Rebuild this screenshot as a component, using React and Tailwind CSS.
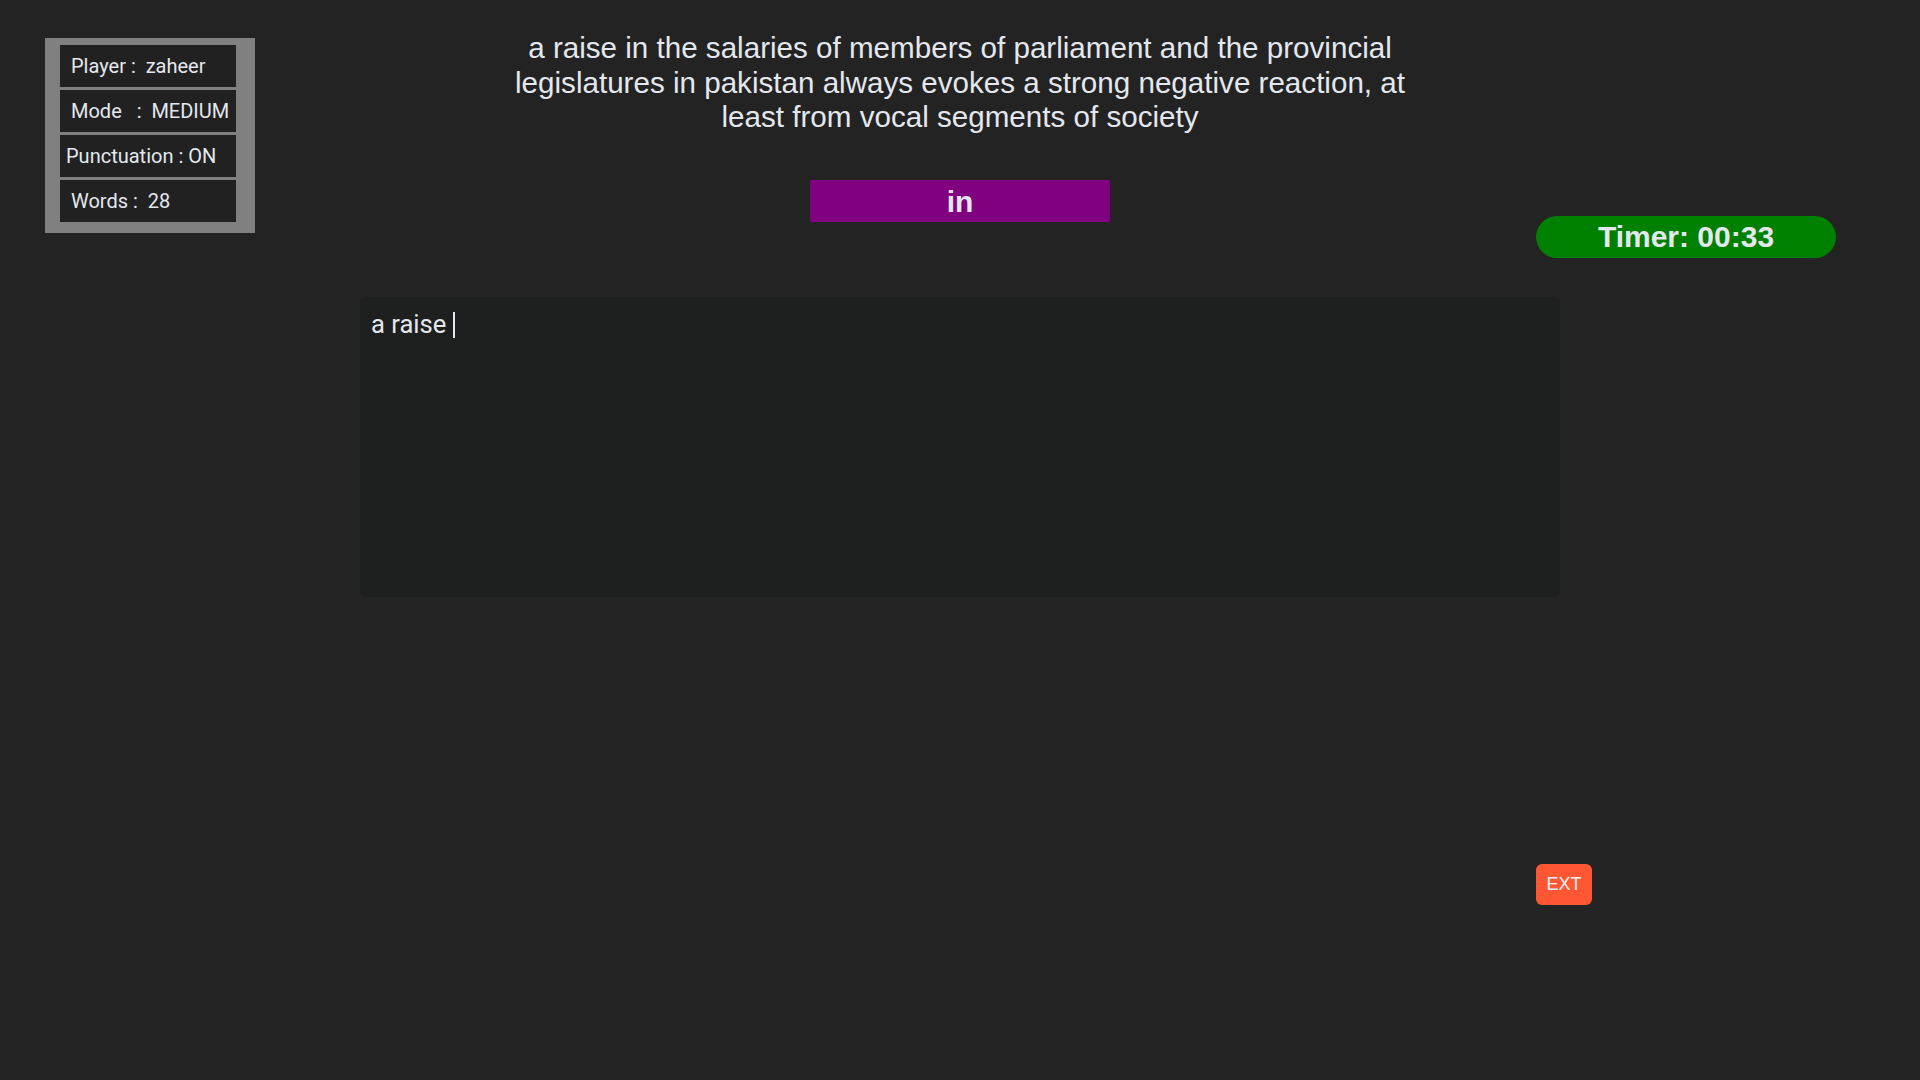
import { useState } from 'react';

const STATS = [
  { label: 'Player :  zaheer', pad: 'pl-[11px]' },
  { label: 'Mode   :  MEDIUM', pad: 'pl-[11px]' },
  { label: 'Punctuation : ON', pad: 'pl-[6px]' },
  { label: 'Words :  28', pad: 'pl-[11px]' },
];

const SENTENCE =
  'a raise in the salaries of members of parliament and the provincial legislatures in pakistan always evokes a strong negative reaction, at least from vocal segments of society';

export default function App() {
  const [typed] = useState('a raise ');

  return (
    <div className="min-h-screen w-full bg-[#232323] text-[#e4e8ee] font-['Liberation_Sans',Arial,sans-serif]">
      <div className="grid grid-cols-[1fr_920px_1fr] items-start">
        {/* stats panel */}
        <div className="ml-[45px] mt-[38px] w-[210px] bg-[#808080] pl-[15px] pr-[19px] pt-[7px] pb-[11px] flex flex-col gap-[3px] font-['Roboto',sans-serif] text-[20px]">
          {STATS.map((s) => (
            <div key={s.label} className={`h-[42px] bg-[#212121] flex items-center whitespace-pre ${s.pad}`}>
              {s.label}
            </div>
          ))}
        </div>

        {/* sentence + current word */}
        <div className="flex flex-col items-center pt-[31px]">
          <p className="text-center text-[29.6px] leading-[34.7px]">{SENTENCE}</p>
          <div className="mt-[45px] w-[300px] h-[42px] bg-[#800080] flex items-center justify-center text-[30px] font-bold">
            in
          </div>
        </div>

        {/* timer */}
        <div className="ml-[116px] mt-[216px]">
          <div className="w-[300px] h-[42px] rounded-full bg-[#008000] flex items-center justify-center text-[30px] font-bold pb-[1px]">
            Timer: 00:33
          </div>
        </div>
      </div>

      {/* typing area */}
      <div className="mx-auto mt-[39px] w-[1200px] h-[300px] rounded-[6px] bg-[#1e1f1f] px-[11px] pt-[11px] font-['Roboto',sans-serif] text-[25.6px] leading-[32px]">
        <span className="whitespace-pre">{typed}</span>
        <span className="inline-block w-[2px] h-[26px] bg-[#e4e8ee] align-[-5px]" />
      </div>

      <div className="grid grid-cols-[1fr_920px_1fr]">
        <div />
        <div />
        <div className="ml-[116px] mt-[267px] pb-[175px]">
          <button className="w-[56px] h-[41px] rounded-[6px] bg-[#ff5733] text-[18px] text-[#f0f0f0]">EXT</button>
        </div>
      </div>
    </div>
  );
}
